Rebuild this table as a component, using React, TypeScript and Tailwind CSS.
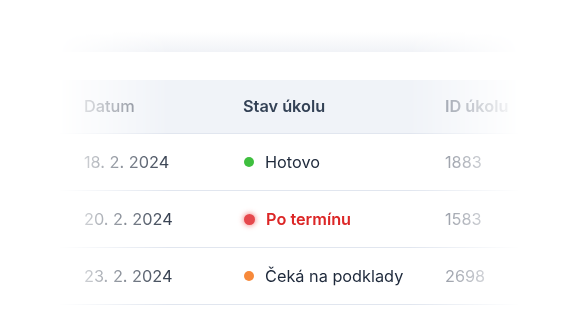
import React from "react";

type Row = {
  date: string;
  status: string;
  id: string;
  tone: "done" | "late" | "waiting";
};

const rows: Row[] = [
  { date: "18. 2. 2024", status: "Hotovo", id: "1883", tone: "done" },
  { date: "20. 2. 2024", status: "Po termínu", id: "1583", tone: "late" },
  { date: "23. 2. 2024", status: "Čeká na podklady", id: "2698", tone: "waiting" },
];

const fade =
  "[mask-image:linear-gradient(to_right,transparent_0%,black_24%,black_76%,transparent_100%)]";

function Dot({ tone }: { tone: Row["tone"] }) {
  if (tone === "done") return <span className="h-[10px] w-[10px] rounded-full bg-[#3fbf3f]" />;
  if (tone === "late")
    return (
      <span className="h-[11px] w-[11px] rounded-full bg-[#e5484d] shadow-[0_0_5px_1px_rgba(239,68,68,0.55)]" />
    );
  return <span className="h-[10px] w-[10px] rounded-full bg-[#f7893b]" />;
}

export default function App() {
  return (
    <div className="h-[327px] w-[580px] overflow-hidden bg-white font-['Inter',sans-serif]">
      <div className="ml-[58px] w-[462px]">
        <div
          className={`mt-[32px] h-[20px] bg-gradient-to-b from-white to-[#f1f3f7] ${fade}`}
        />
        <div className={`mt-[28px] ${fade}`}>
          <div className="grid h-[54px] grid-cols-[185px_202px_75px] items-center border-b border-[#e1e6ef] bg-[#f0f3f8] text-[16.3px]">
            <div className="pl-[26px] font-medium text-[#6b7280]">Datum</div>
            <div className="font-semibold text-[#334155]">Stav úkolu</div>
            <div className="font-semibold text-[#7c8493]">ID úkolu</div>
          </div>
          {rows.map((r) => (
            <div
              key={r.id}
              className="grid h-[57px] grid-cols-[185px_202px_75px] items-center border-b border-[#e1e6ef] text-[16.3px]"
            >
              <div className="pl-[26px] text-[#374151]">{r.date}</div>
              <div className="flex items-center gap-[11px] pl-px">
                <Dot tone={r.tone} />
                <span
                  className={
                    r.tone === "late"
                      ? "font-semibold text-[#dc2626]"
                      : "text-[#1e293b]"
                  }
                >
                  {r.status}
                </span>
              </div>
              <div className="text-[#6b7280]">{r.id}</div>
            </div>
          ))}
        </div>
      </div>
    </div>
  );
}
